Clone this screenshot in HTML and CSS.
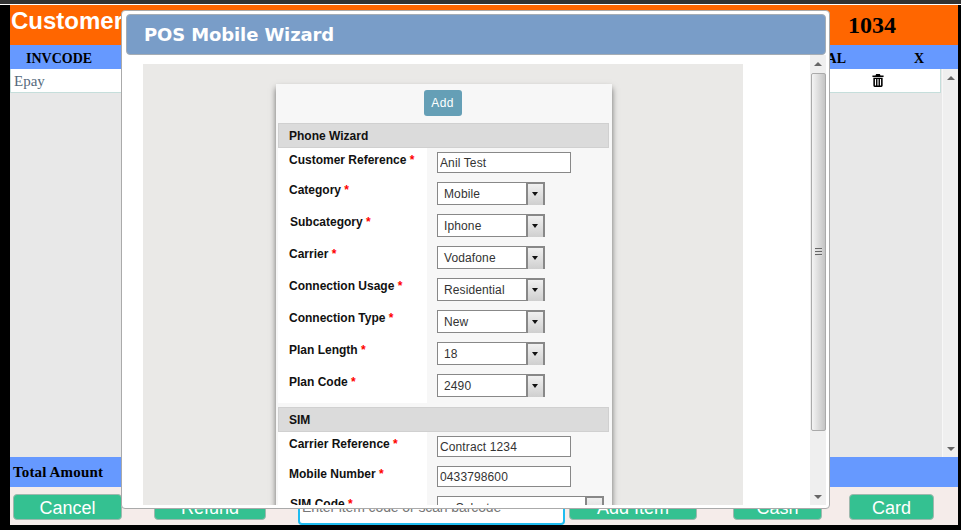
FILE: index.html
```html
<!DOCTYPE html>
<html lang="en">
<head>
<meta charset="utf-8">
<title>POS</title>
<link rel="stylesheet" href="styles.css">
</head>
<body>
<div class="topline"></div>
<main class="app">
  <header class="head">
    <div class="head-title">Customer</div>
    <div class="head-num">1034</div>
  </header>
  <div class="cols">
    <span class="col-inv">INVCODE</span>
    <span class="col-total">TOTAL</span>
    <span class="col-x">X</span>
  </div>
  <section class="list">
    <div class="list-main">
      <div class="row">
        <span class="row-code">Epay</span>
        <svg class="trash" viewBox="0 0 12 14" width="12" height="13" aria-hidden="true"><path d="M4 0h4l.7 1.600H12v1.600H0V1.600h3.300zM1 4h10v8.500c0 .9-.6 1.500-1.400 1.500H2.400C1.600 14 1 13.400 1 12.500zm1.700 1.400v7h1.200v-7zm2.700 0v7h1.200v-7zm2.700 0v7h1.200v-7z" fill-rule="evenodd"/></svg>
      </div>
    </div>
    <div class="sb sb-outer">
      <span class="arrow-up"></span>
      <span class="arrow-down"></span>
    </div>
  </section>
  <div class="total">Total Amount</div>
  <footer class="actions">
    <button class="btn btn-cancel">Cancel</button>
    <button class="btn btn-refund">Refund</button>
    <input class="scan" placeholder="Enter item code or scan barcode">
    <button class="btn btn-add">Add Item</button>
    <button class="btn btn-cash">Cash</button>
    <button class="btn btn-card">Card</button>
  </footer>
</main>

<div class="modal">
  <div class="modal-title">POS Mobile Wizard</div>
  <div class="modal-body">
    <div class="modal-scroll">
      <div class="panel">
        <div class="card">
          <div class="card-top"><button class="add">Add</button></div>
          <h3 class="sect">Phone Wizard</h3>
          <div class="frow frow-first"><label class="lbl">Customer Reference <b>*</b></label><div class="val"><input class="txt" value="Anil Test"></div></div>
          <div class="frow"><label class="lbl">Category <b>*</b></label><div class="val"><div class="sel"><span>Mobile</span><i></i></div></div></div>
          <div class="frow"><label class="lbl lbl-in">Subcategory <b>*</b></label><div class="val"><div class="sel"><span>Iphone</span><i></i></div></div></div>
          <div class="frow"><label class="lbl">Carrier <b>*</b></label><div class="val"><div class="sel"><span>Vodafone</span><i></i></div></div></div>
          <div class="frow"><label class="lbl">Connection Usage <b>*</b></label><div class="val"><div class="sel"><span>Residential</span><i></i></div></div></div>
          <div class="frow"><label class="lbl">Connection Type <b>*</b></label><div class="val"><div class="sel"><span>New</span><i></i></div></div></div>
          <div class="frow"><label class="lbl">Plan Length <b>*</b></label><div class="val"><div class="sel"><span>18</span><i></i></div></div></div>
          <div class="frow frow-last"><label class="lbl">Plan Code <b>*</b></label><div class="val"><div class="sel"><span>2490</span><i></i></div></div></div>
          <h3 class="sect">SIM</h3>
          <div class="frow frow-txt"><label class="lbl">Carrier Reference <b>*</b></label><div class="val"><input class="txt" value="Contract 1234"></div></div>
          <div class="frow frow-txt"><label class="lbl">Mobile Number <b>*</b></label><div class="val"><input class="txt" value="0433798600"></div></div>
          <div class="frow"><label class="lbl lbl-in">SIM Code <b>*</b></label><div class="val"><div class="sel sel-wide"><span>-- Select --</span><i></i></div></div></div>
        </div>
      </div>
    </div>
    <div class="sb sb-modal">
      <span class="arrow-up"></span>
      <div class="thumb"><em></em></div>
      <span class="arrow-down"></span>
    </div>
  </div>
</div>
</body>
</html>
```
FILE: styles.css
```css
* { box-sizing: border-box; }
html, body { margin: 0; padding: 0; height: 530px; overflow: hidden; }
body { background: #000; font-family: "Liberation Sans", Arial, sans-serif; position: relative; }
.topline { height: 5px; background: #333; border-bottom: 1px solid #fff; }
.app { margin: 0 3px 0 10px; height: 520px; display: flex; flex-direction: column; background: #f5ecea; }
.head { height: 40px; background: #f60; display: flex; justify-content: space-between; }
.head-title { color: #fff; font: bold 24px/32px "Liberation Sans", sans-serif; padding-left: 1px; }
.head-num { font: bold 24px/41px "Liberation Serif", serif; color: #000; width: 110px; }
.cols { height: 24px; background: #6699ff; font: bold 14px/27px "Liberation Serif", serif; color: #000; display: flex; padding-left: 16px; }
.col-inv { width: 752px; }
.col-total { width: 68px; text-align: right; }
.col-x { margin-left: 68px; }
.list { height: 388px; background: #e8e8e8; display: flex; }
.list-main { flex: 1; }
.row { height: 24px; width: 931px; background: #fff; border: 1px solid #c5dedb; border-top: 0; display: flex; justify-content: space-between; padding: 0 56px 0 3px; align-items: center; }
.row-code { font: 15px/22px "Liberation Serif", serif; color: #56697c; }
.trash { display: block; margin-bottom: 1px; }
.sb { background: #efefef; display: flex; flex-direction: column; justify-content: space-between; align-items: center; }
.sb-outer { width: 16px; padding: 7px 0 6px; border-left: 1px solid #f7f7f7; }
.arrow-up { width: 0; height: 0; border: 4px solid transparent; border-top: 0; border-bottom: 4px solid #666; }
.arrow-down { width: 0; height: 0; border: 4px solid transparent; border-bottom: 0; border-top: 4px solid #666; }
.total { height: 30px; background: #6699ff; font: bold 15px/30px "Liberation Serif", serif; letter-spacing: .15px; color: #000; padding-left: 3px; }
.actions { height: 38px; display: flex; align-items: flex-start; padding: 7px 0 0 3px; }
.btn { height: 26px; padding: 1px 0 0; border: 1px solid #9fb8ae; border-radius: 4px; background: #34c191; color: #fff; font: 18px/24px "Liberation Sans", sans-serif; }
.btn-cancel { width: 109px; margin-right: 32px; }
.btn-refund { width: 112px; margin-right: 32px; }
.scan { width: 267px; height: 38px; margin-top: -7px; border: 2px solid #1fbcf0; border-radius: 4px; font: 14px "Liberation Sans", sans-serif; letter-spacing: -.1px; padding: 2px 2px 0; margin-right: 4px; }
.scan::placeholder { color: #777; opacity: 1; }
.btn-add { width: 128px; margin-right: 36px; }
.btn-cash { width: 89px; margin-right: 27px; }
.btn-card { width: 85px; }

.modal { position: absolute; left: 121px; top: 10px; width: 709px; height: 499px; background: #fff; border: 1px solid #aaa; border-radius: 4px; padding: 3px 3px 3px 4px; display: flex; flex-direction: column; }
.modal-title { height: 41px; flex: none; background: #799dc8; border: 1px solid #a5adb5; border-radius: 4px; color: #fff; font: bold 18px/39px "DejaVu Sans", sans-serif; letter-spacing: -.12px; padding-left: 17px; }
.modal-body { flex: 1; min-height: 0; display: flex; }
.modal-scroll { flex: 1; min-width: 0; overflow: hidden; padding: 9px 0 0 17px; }
.panel { width: 600px; height: 441px; background: #eae9e7; padding: 20px 0 0 133px; overflow: hidden; }
.card { width: 336px; background: #f7f7f7; box-shadow: 0 4px 6px rgba(0,0,0,.55); padding: 0 3px 0 2px; }
.card-top { height: 39px; background: #f7f7f7; display: flex; justify-content: center; padding: 6px 2px 0 0; }
.add { height: 26px; width: 38px; padding: 0; border: 0; border-radius: 3px; background: #659fb6; color: #fff; font: 12px "Liberation Sans", sans-serif; letter-spacing: .3px; }
.sect { margin: 0; height: 25px; background: #dbdbdb; border: 1px solid #d0d0d0; font: bold 12px/24px "Liberation Sans", sans-serif; color: #111; padding-left: 10px; }
.frow { display: flex; height: 32px; }
.frow-first { height: 30px; }
.frow-last { height: 37px; border-bottom: 4px solid #f7f7f7; }
.frow-txt { height: 30px; }
.lbl { width: 149px; font: bold 12px/14px "Liberation Sans", sans-serif; color: #111; padding: 5px 0 0 11px; background: #fff; }
.lbl-in { padding-left: 12px; }
.lbl b { color: #f00; }
.val { flex: 1; background: #f7f7f7; padding: 4px 0 0 10px; }
.txt { display: block; width: 134px; height: 21px; border: 1px solid #888; background: #fff; font: 12px "Liberation Sans", sans-serif; letter-spacing: .12px; color: #333; padding: 0 2px; }
.sel { width: 108px; height: 23px; border: 1px solid #888; background: #fff; display: flex; justify-content: space-between; font: 12px/22px "Liberation Sans", sans-serif; letter-spacing: .12px; color: #333; padding-left: 6px; }
.sel-wide { width: 167px; }
.sel i { width: 18px; height: 22px; background: linear-gradient(#f0f0f0, #cfcfcf); border: 2px solid #888; border-width: 1px 1px 0 2px; position: relative; display: block; }
.sel i::after { content: ""; position: absolute; left: 4px; top: 8px; border: 3.500px solid transparent; border-bottom: 0; border-top: 4px solid #111; }
.sb-modal { width: 16px; padding: 7px 0 6px; }
.thumb { width: 15px; height: 358px; margin-top: 7px; margin-bottom: auto; border: 1px solid #aaa; border-radius: 2px; background: linear-gradient(90deg, #f4f4f4, #c4c4c4); display: flex; align-items: center; justify-content: center; }
.thumb em { display: block; width: 7px; height: 8px; background: repeating-linear-gradient(#666 0 1px, #ddd 1px 2px, transparent 2px 3px); }
```
